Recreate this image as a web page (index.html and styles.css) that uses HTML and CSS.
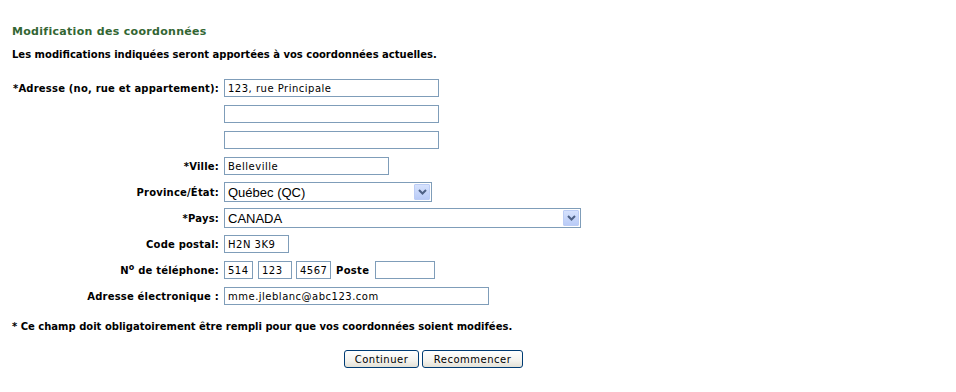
FILE: index.html
```html
<!DOCTYPE html>
<html lang="fr">
<head>
<meta charset="utf-8">
<title>Modification des coordonnées</title>
<link rel="stylesheet" href="styles.css">
</head>
<body>
<div class="page">
  <h1 class="title">Modification des coordonnées</h1>
  <p class="intro">Les modifications indiquées seront apportées à vos coordonnées actuelles.</p>
  <div class="form">
    <label class="lbl">*Adresse (no, rue et appartement):</label>
    <div class="fld"><input class="txt w-addr" type="text" value="123, rue Principale"></div>
    <span class="lbl"></span>
    <div class="fld"><input class="txt w-addr" type="text" value=""></div>
    <span class="lbl"></span>
    <div class="fld"><input class="txt w-addr" type="text" value=""></div>
    <label class="lbl">*Ville:</label>
    <div class="fld"><input class="txt w-ville" type="text" value="Belleville"></div>
    <label class="lbl">Province/État:</label>
    <div class="fld"><div class="sel w-prov"><select><option>Québec (QC)</option></select><span class="arrow"><svg width="9" height="6" viewBox="0 0 9 6"><path d="M1 1 L4.5 4.5 L8 1" fill="none" stroke="#4d6185" stroke-width="2"/></svg></span></div></div>
    <label class="lbl">*Pays:</label>
    <div class="fld"><div class="sel w-pays"><select><option>CANADA</option></select><span class="arrow"><svg width="9" height="6" viewBox="0 0 9 6"><path d="M1 1 L4.5 4.5 L8 1" fill="none" stroke="#4d6185" stroke-width="2"/></svg></span></div></div>
    <label class="lbl">Code postal:</label>
    <div class="fld"><input class="txt w-code" type="text" value="H2N 3K9"></div>
    <label class="lbl">N<sup>o</sup> de téléphone:</label>
    <div class="fld phone">
      <input class="txt w-p1" type="text" value="514">
      <input class="txt w-p2" type="text" value="123">
      <input class="txt w-p3" type="text" value="4567">
      <span class="poste">Poste</span>
      <input class="txt w-poste" type="text" value="">
    </div>
    <label class="lbl">Adresse électronique :</label>
    <div class="fld"><input class="txt w-mail" type="text" value="mme.jleblanc@abc123.com"></div>
  </div>
  <p class="note">* Ce champ doit obligatoirement être rempli pour que vos coordonnées soient modifées.</p>
  <div class="actions">
    <button class="btn w-cont" type="button">Continuer</button>
    <button class="btn w-rec" type="button">Recommencer</button>
  </div>
</div>
</body>
</html>
```
FILE: styles.css
```css
html, body {
  margin: 0;
  padding: 0;
  background: #ffffff;
}
body {
  font-family: "DejaVu Sans", Verdana, sans-serif;
  color: #000000;
}
.page {
  padding: 25px 0 0 12px;
}
.title {
  margin: 0;
  font-size: 11px;
  line-height: 14px;
  font-weight: bold;
  color: #336633;
  letter-spacing: 0.3px;
}
.intro {
  margin: 9px 0 0 0;
  font-size: 10px;
  line-height: 14px;
  font-weight: bold;
}
.form {
  margin-top: 13px;
  display: grid;
  grid-template-columns: 207px auto;
  grid-auto-rows: 26px;
  column-gap: 5px;
  align-items: center;
}
.lbl {
  text-align: right;
  font-size: 10px;
  font-weight: bold;
  letter-spacing: 0.2px;
  white-space: nowrap;
}
.lbl sup {
  font-size: 8px;
  line-height: 0;
  vertical-align: 4px;
}
.fld {
  display: flex;
  align-items: center;
}
.txt {
  box-sizing: border-box;
  height: 18px;
  margin: 0;
  border: 1px solid #7f9db9;
  padding: 0 0 0 3px;
  font-family: "DejaVu Sans", Verdana, sans-serif;
  font-size: 10px;
  letter-spacing: 0.5px;
  color: #000;
  background: #fff;
  outline: none;
}
.w-addr { width: 215px; }
.w-ville { width: 165px; }
.w-code { width: 65px; }
.w-mail { width: 265px; }
.w-p1 { width: 29px; }
.w-p2 { width: 34px; margin-left: 5px; }
.w-p3 { width: 35px; margin-left: 4px; }
.w-poste { width: 60px; margin-left: 6px; }
.poste {
  margin-left: 5px;
  font-size: 10px;
  font-weight: bold;
  letter-spacing: 0.3px;
}
.sel {
  position: relative;
  box-sizing: border-box;
  height: 20px;
  border: 1px solid #7f9db9;
  background: #fff;
}
.w-prov { width: 208px; }
.w-pays { width: 357px; }
.sel select {
  -webkit-appearance: none;
  appearance: none;
  display: block;
  width: 100%;
  height: 18px;
  margin: 0;
  border: 0;
  padding: 0 0 0 3px;
  background: transparent;
  font-family: "Liberation Sans", Arial, sans-serif;
  font-size: 13px;
  color: #000;
  outline: none;
}
.arrow {
  position: absolute;
  top: 1px;
  right: 1px;
  width: 16px;
  height: 16px;
  box-sizing: border-box;
  border: 1px solid #bccdf5;
  border-radius: 1px;
  background: linear-gradient(#d6e2fd, #b9cbf7);
  display: flex;
  align-items: center;
  justify-content: center;
}
.note {
  margin: 11px 0 0 0;
  font-size: 10px;
  line-height: 14px;
  font-weight: bold;
}
.actions {
  width: 843px;
  margin-top: 16px;
  display: flex;
  justify-content: center;
  gap: 3px;
}
.btn {
  box-sizing: border-box;
  height: 18px;
  margin: 0;
  padding: 0;
  border: 1px solid #003c74;
  border-radius: 3px;
  background: linear-gradient(#ffffff, #f4f3ee 60%, #e3e1d6);
  font-family: "DejaVu Sans", Verdana, sans-serif;
  font-size: 10px;
  letter-spacing: 0.5px;
  color: #000;
}
.w-cont { width: 75px; }
.w-rec { width: 101px; }
```
